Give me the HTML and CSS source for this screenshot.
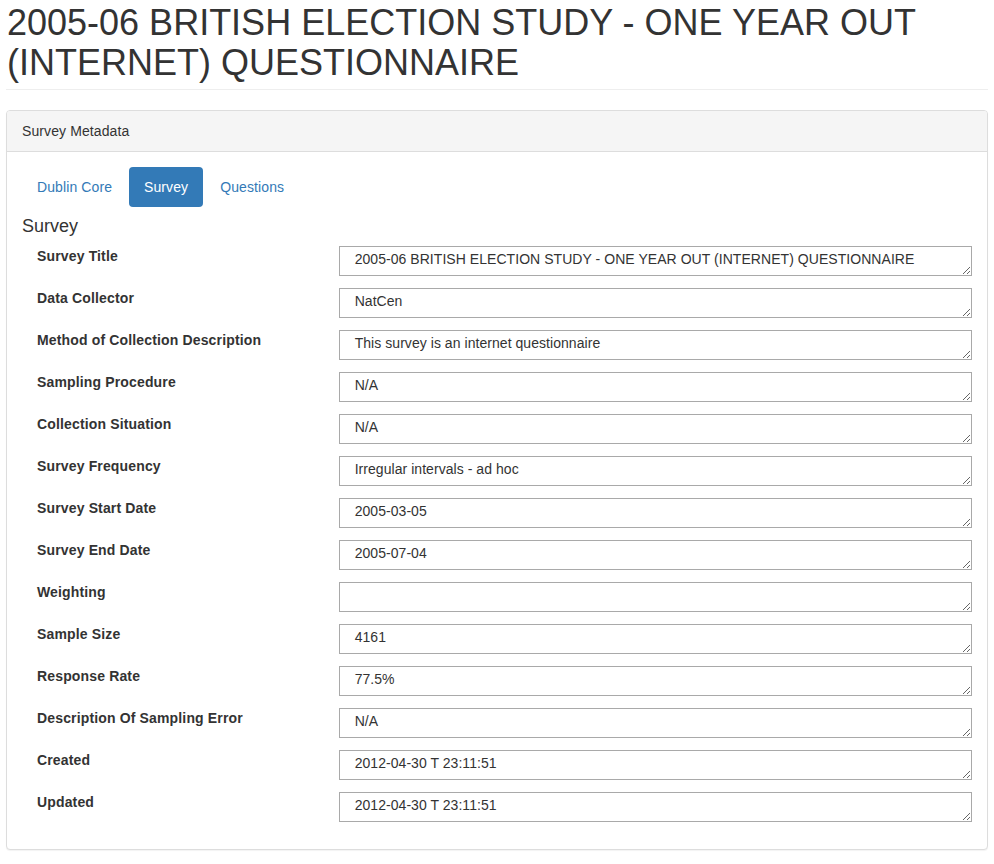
FILE: index.html
```html
<!DOCTYPE html>
<html>
<head>
<meta charset="utf-8">
<link rel="stylesheet" href="styles.css">
</head>
<body>
<div class="page">
  <div class="page-header">
    <h1>2005-06 BRITISH ELECTION STUDY - ONE YEAR OUT (INTERNET) QUESTIONNAIRE</h1>
  </div>
  <div class="panel">
    <div class="panel-heading">Survey Metadata</div>
    <div class="panel-body">
      <ul class="pills">
        <li><a href="#">Dublin Core</a></li>
        <li class="active"><a href="#">Survey</a></li>
        <li><a href="#">Questions</a></li>
      </ul>
      <h4 class="section-title">Survey</h4>
      <div class="fields">
        <div class="field"><label>Survey Title</label><textarea>2005-06 BRITISH ELECTION STUDY - ONE YEAR OUT (INTERNET) QUESTIONNAIRE</textarea></div>
        <div class="field"><label>Data Collector</label><textarea>NatCen</textarea></div>
        <div class="field"><label>Method of Collection Description</label><textarea>This survey is an internet questionnaire</textarea></div>
        <div class="field"><label>Sampling Procedure</label><textarea>N/A</textarea></div>
        <div class="field"><label>Collection Situation</label><textarea>N/A</textarea></div>
        <div class="field"><label>Survey Frequency</label><textarea>Irregular intervals - ad hoc</textarea></div>
        <div class="field"><label>Survey Start Date</label><textarea>2005-03-05</textarea></div>
        <div class="field"><label>Survey End Date</label><textarea>2005-07-04</textarea></div>
        <div class="field"><label>Weighting</label><textarea></textarea></div>
        <div class="field"><label>Sample Size</label><textarea>4161</textarea></div>
        <div class="field"><label>Response Rate</label><textarea>77.5%</textarea></div>
        <div class="field"><label>Description Of Sampling Error</label><textarea>N/A</textarea></div>
        <div class="field"><label>Created</label><textarea>2012-04-30 T 23:11:51</textarea></div>
        <div class="field"><label>Updated</label><textarea>2012-04-30 T 23:11:51</textarea></div>
      </div>
    </div>
  </div>
</div>
</body>
</html>
```

FILE: styles.css
```css
* { box-sizing: border-box; }
html, body { margin: 0; padding: 0; background: #fff; }
body {
  font-family: "Liberation Sans", Arial, sans-serif;
  font-size: 14px;
  line-height: 20px;
  color: #333;
  letter-spacing: 0.1px;
}
.page { padding: 3px 6px 20px; }
.page-header {
  border-bottom: 1px solid #eee;
  padding-bottom: 7px;
  margin-bottom: 20px;
}
.page-header h1 {
  margin: 0;
  font-size: 36px;
  font-weight: 500;
  line-height: 1.1;
  color: #333;
  padding-left: 1px;
  letter-spacing: 0;
}
.panel {
  border: 1px solid #ddd;
  border-radius: 4px;
  box-shadow: 0 1px 1px rgba(0,0,0,0.05);
  background: #fff;
}
.panel-heading {
  background: #f5f5f5;
  border-bottom: 1px solid #ddd;
  border-radius: 3px 3px 0 0;
  padding: 10px 15px;
  color: #333;
}
.panel-body { padding: 15px; }
.pills {
  list-style: none;
  margin: 0;
  padding: 0;
  display: flex;
  gap: 2px;
}
.pills a {
  display: block;
  padding: 10px 15px;
  border-radius: 4px;
  color: #337ab7;
  text-decoration: none;
}
.pills .active a { background: #337ab7; color: #fff; }
.section-title {
  margin: 10px 0 9px;
  font-size: 18px;
  font-weight: 500;
  line-height: 1.1;
  letter-spacing: 0;
}
.field {
  display: grid;
  grid-template-columns: 1fr 2fr;
  margin-bottom: 12px;
}
.field label {
  font-weight: bold;
  padding: 0 15px;
  letter-spacing: 0.15px;
}
.field textarea {
  display: block;
  width: 100%;
  height: 30px;
  margin: 0;
  padding: 2px 15px;
  border: 1px solid #a9a9a9;
  border-radius: 0;
  font-family: "Liberation Sans", Arial, sans-serif;
  font-size: 14px;
  line-height: 20px;
  color: #333;
  background: #fff;
  overflow: hidden;
  letter-spacing: 0.05px;
}
```
